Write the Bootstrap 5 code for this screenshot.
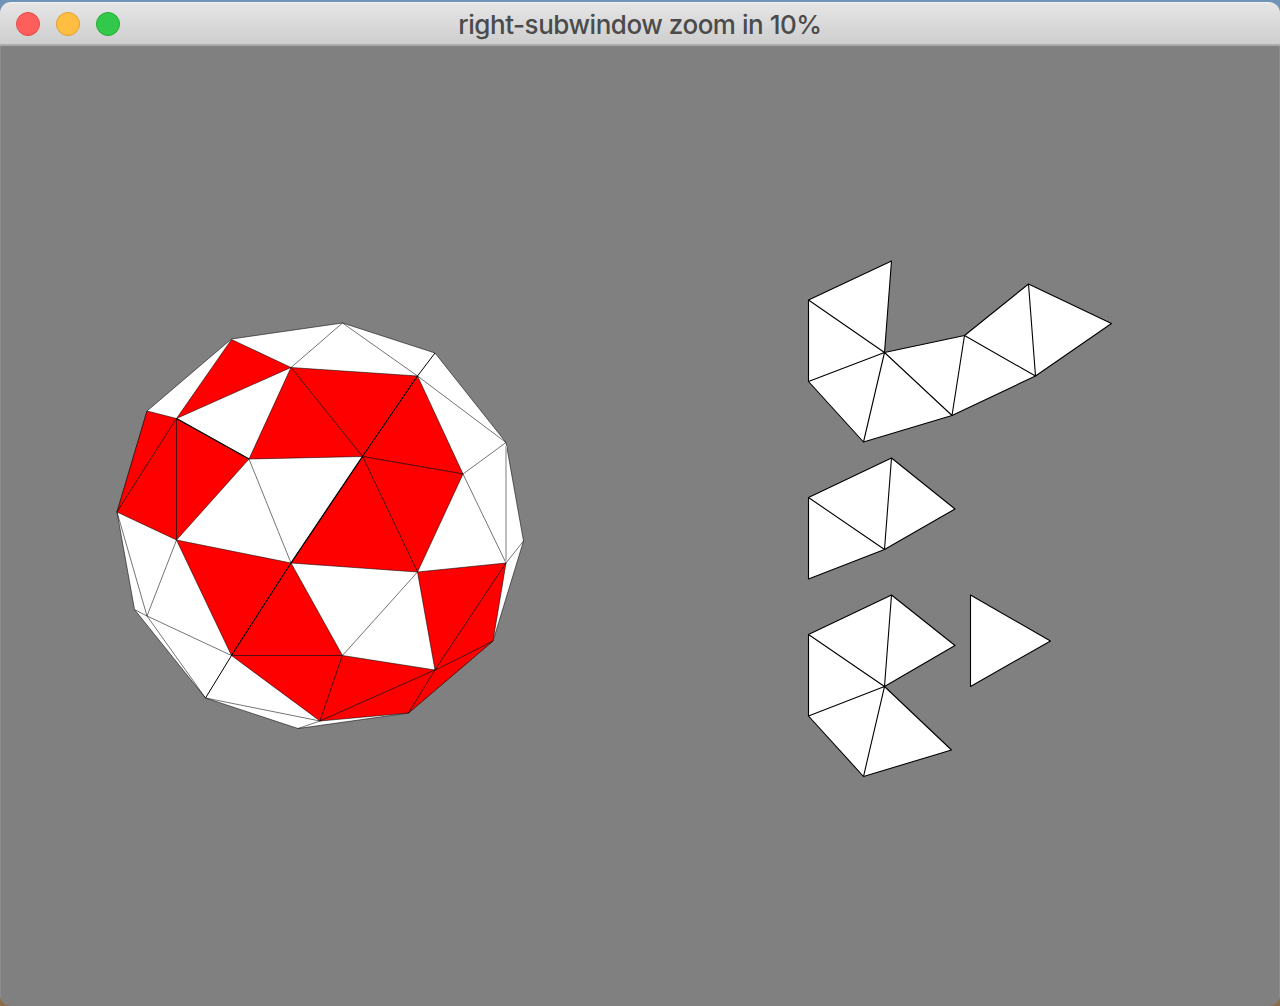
<!DOCTYPE html>
<html lang="en">
<head>
<meta charset="utf-8">
<meta name="viewport" content="width=device-width, initial-scale=1">
<title>right-subwindow zoom in 10%</title>
<link href="https://cdn.jsdelivr.net/npm/bootstrap@5.3.0/dist/css/bootstrap.min.css" rel="stylesheet">
<style>
  body { background: linear-gradient(#6f93b9 0, #7f99bd 50px, #8a6a4c 900px, #8c6a4a 100%); padding-top: 2px; }
  .app-window { border-radius: 11px; background: #808080; }
  .title-bar { height: 44px; flex: none; padding: 0 16px; background: linear-gradient(#f4f4f4 0, #e5e5e5 2px, #cecece 100%); border-bottom: 2px solid #ababab; }
  .lights { width: 104px; gap: 16px; padding-top: 2px; }
  .light { width: 24px; height: 24px; border: 1px solid; border-radius: 50%; }
  .light-close { background: #ff5f5a; border-color: #e44b48; }
  .light-min { background: #ffbe3f; border-color: #e0a033; }
  .light-max { background: #32c84a; border-color: #20ad32; }
  .window-title { font: 500 26px/42px Inter, "Liberation Sans", sans-serif; color: #4b4b4b; letter-spacing: -.47px; white-space: nowrap; padding-top: 3px; }
  .stage { border: solid #8c8c8c; border-width: 0 1px; }
  .scene { display: block; width: 100%; height: 100%; stroke: #000; stroke-linejoin: round; }
  .wire { fill: none; }
</style>
<script src="https://cdn.jsdelivr.net/npm/bootstrap@5.3.0/dist/js/bootstrap.bundle.min.js"></script>
</head>
<body class="vh-100 overflow-hidden d-flex flex-column">
  <main class="app-window flex-fill d-flex flex-column overflow-hidden">
    <header class="title-bar d-flex align-items-center justify-content-between">
      <div class="lights d-flex">
        <span class="light light-close"></span>
        <span class="light light-min"></span>
        <span class="light light-max"></span>
      </div>
      <div class="window-title">right-subwindow zoom in 10%</div>
      <div class="lights"></div>
    </header>
    <div class="stage row g-0 flex-fill">
      <div class="col-6">
        <svg class="scene" viewBox="1 46 639 960" stroke-width=".55">
          <path fill="#fff" d="M231.500 339 342.500 323 435 353 506 442.500 523.500 541 493 641 408.500 713 298 728.500 205.500 698 134.500 609.500 117 512 147 411Z"/>
          <g fill="#f00" stroke-width=".55">
            <path d="M231.500 339.500 291 367.500 176.500 418.500Z"/>
            <path d="M291 367.500 417.500 376 362.500 456.500Z"/>
            <path d="M291 367.500 362.500 456.500 249 459Z"/>
            <path d="M417.500 376 463 474 362.500 456.500Z"/>
            <path d="M362.500 456.500 463 474 417.500 572Z"/>
            <path d="M362.500 456.500 417.500 572 291 563Z"/>
            <path d="M147 411 176.500 418.500 117 512Z"/>
            <path d="M117 512 176.500 418.500V540Z"/>
            <path d="M176.500 418.500 249 459 176.500 540Z"/>
            <path d="M176.500 540 291 563 231.500 655.500Z"/>
            <path d="M291 563 342.500 655.500H231.500Z"/>
            <path d="M231.500 655.500H342.500L320 721Z"/>
            <path d="M342.500 655.500 435 670 320 721Z"/>
            <path d="M320 721 435 670 408.500 713Z"/>
            <path d="M435 670 493 641 408.500 713Z"/>
            <path d="M417.500 572 506 563 435 670Z"/>
            <path d="M506 563 493 641 435 670Z"/>
          </g>
          <path class="wire" d="M291 367.500 342.500 323 417.500 376 506 442.500 463 474 506 563 523.500 541M249 459 291 563M417.500 572 342.500 655.500M117 512 147 616 176.500 540M134.500 609.500 147 616 231.500 655.500M147 616 205.500 698 320 721 298 728.500"/>
          <path class="wire" stroke="#bebebe" stroke-width="2" d="M506 446V562"/>
          <path class="wire" stroke-width="1" d="M435 353 417.500 376 362.500 456.500M291 563 231.500 655.500 205.500 698"/>
          <path class="wire" stroke-width="1.300" d="M176.500 418.500 249 459M362.500 456.500 291 563"/>
        </svg>
      </div>
      <div class="col-6">
        <svg class="scene" viewBox="640 46 639 960" stroke-width="1.100">
          <g fill="#fff">
            <path d="M891.500 261 808.500 300V381.500L863.500 442 952 415.500 1035.500 376 1111.500 323.500 1028.500 284 964.500 335.500 884.500 352.500Z"/>
            <path d="M891.500 458 808.500 497.500V579L884.500 549.500 955 509Z"/>
            <path d="M891.500 595 808.500 634.500V716L863.500 776.500 951.500 750 884.500 686.500 955 645.500Z"/>
            <path d="M970.500 595 1050.500 641 970.500 686.500Z"/>
          </g>
          <path class="wire" d="M808.500 300 884.500 352.500 808.500 381.500M863.500 442 884.500 352.500 952 415.500 964.500 335.500 1035.500 376 1028.500 284"/>
          <path class="wire" d="M808.500 497.500 884.500 549.500 891.500 458"/>
          <path class="wire" d="M808.500 634.500 884.500 686.500 808.500 716M891.500 595 884.500 686.500 863.500 776.500"/>
        </svg>
      </div>
    </div>
  </main>
</body>
</html>
